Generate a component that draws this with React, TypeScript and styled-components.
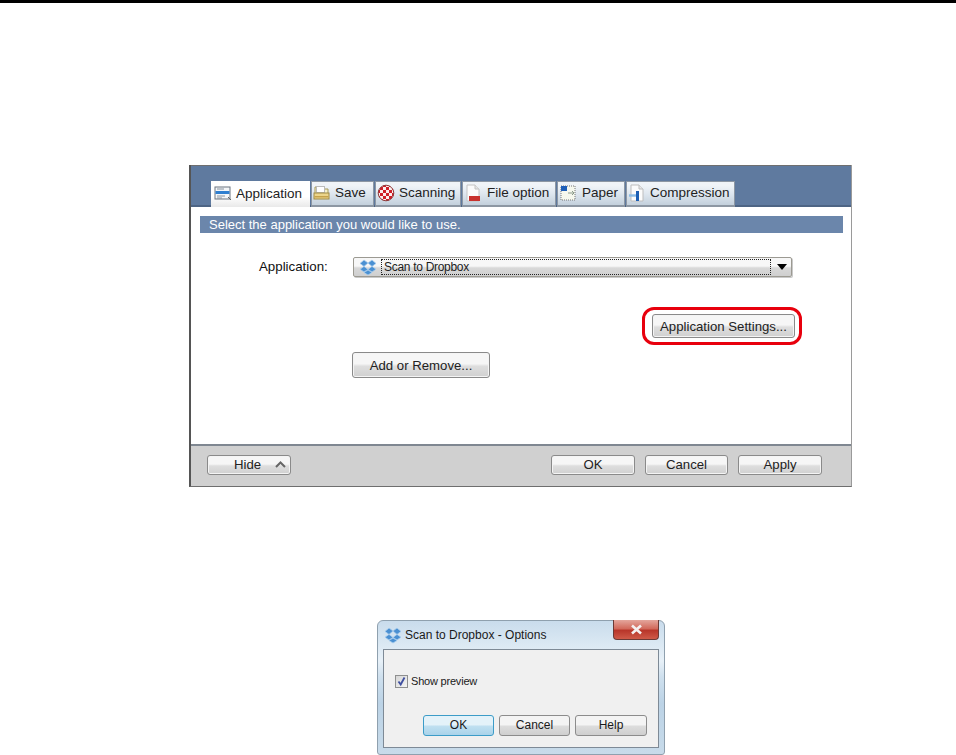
import React from "react";
import styled, { createGlobalStyle } from "styled-components";

const Global = createGlobalStyle`
  html, body { margin: 0; padding: 0; background: #fff; height: 755px; overflow: hidden; }
  * { box-sizing: border-box; }
  body { font-family: "Liberation Sans", Arial, sans-serif; color: #111; }
`;

const Page = styled.div`
  width: 956px;
  height: 755px;
  overflow: hidden;
  display: flex;
  flex-direction: column;
`;
const TopRule = styled.div`
  height: 3px;
  background: #000;
  flex: none;
`;
const MainWindow = styled.section`
  width: 663px;
  height: 322px;
  margin: 162px 0 0 189px;
  flex: none;
  display: flex;
  flex-direction: column;
  border-left: 2px solid #555;
  border-right: 1px solid #9a9a9a;
  border-bottom: 1px solid #6e6e6e;
  background: #fff;
`;
const TabHeader = styled.div`
  height: 42px;
  flex: none;
  background: #5f7a9f;
  border-top: 1px solid #6f6f6f;
  border-bottom: 2px solid #4d6484;
  padding: 15px 0 0 20px;
  display: flex;
  gap: 1px;
  align-items: flex-start;
`;
const Tab = styled.div<{ $w: number; $active?: boolean }>`
  width: ${(p) => p.$w}px;
  height: 26px;
  flex: none;
  display: flex;
  align-items: center;
  gap: 4px;
  padding: 0 0 2px ${(p) => (p.$active ? 3 : 1)}px;
  font-size: 13.5px;
  white-space: nowrap;
  color: #222;
  background: ${(p) =>
    p.$active
      ? "linear-gradient(#ffffff 0 60%, #e9e9e9)"
      : "linear-gradient(#f0f4f8 0 15%, #dfe7ef 50%, #c3d0dc)"};
  border: ${(p) => (p.$active ? "none" : "1px solid #8d97a3")};
  border-bottom: ${(p) => (p.$active ? "none" : "2px solid #8d97a3")};
`;
const TabIcon = styled.svg`
  width: 18px;
  height: 18px;
  flex: none;
`;
const TabLabel = styled.span<{ $gap?: number }>`
  margin-left: ${(p) => p.$gap ?? 0}px;
`;
const Body = styled.div`
  flex: 1;
  display: flex;
  flex-direction: column;
  padding: 9px 8px 0 9px;
  background: #fff;
`;
const Banner = styled.div`
  height: 17px;
  flex: none;
  background: #6b86ab;
  color: #fff;
  font-size: 13px;
  line-height: 17px;
  padding-left: 9px;
  white-space: nowrap;
`;
const ComboRow = styled.div`
  display: flex;
  align-items: center;
  margin-top: 24px;
  height: 20px;
  flex: none;
`;
const ComboLabel = styled.span`
  width: 153px;
  padding: 0 0 1px 59px;
  font-size: 13.3px;
  white-space: nowrap;
`;
const Combo = styled.div`
  width: 439px;
  height: 20px;
  display: flex;
  align-items: center;
  padding-left: 5px;
  border: 1px solid #9c9a92;
  border-radius: 2px;
  background: linear-gradient(#f7f7f7 0 45%, #d8d8d8 55%, #cfcfcf);
  box-shadow: 1px 1px 0 #c9c9c9;
`;
const ComboFocus = styled.div`
  width: 390px;
  height: 16px;
  margin-left: 4px;
  display: flex;
  align-items: center;
  padding: 0 0 1px 2px;
  border: 1px dotted #222;
  font-size: 12px;
  letter-spacing: -0.3px;
  color: #1c1c1c;
  white-space: nowrap;
`;
const ComboArrow = styled.div`
  width: 0;
  height: 0;
  margin-left: 6px;
  border-left: 5.5px solid transparent;
  border-right: 5.5px solid transparent;
  border-top: 6px solid #000;
`;
const SettingsRow = styled.div`
  display: flex;
  justify-content: flex-end;
  padding-right: 41px;
  margin-top: 30px;
  flex: none;
`;
const Highlight = styled.div`
  width: 160px;
  height: 38px;
  padding: 4px 4px 4px 7px;
  border: 3px solid #e8000d;
  border-radius: 12px;
  display: flex;
  align-items: center;
`;
const WinButton = styled.div<{ $w: number; $h: number }>`
  width: ${(p) => p.$w}px;
  height: ${(p) => p.$h}px;
  flex: none;
  display: flex;
  align-items: center;
  justify-content: center;
  border: 1px solid #8a8a8a;
  border-radius: 3px;
  font-size: 13.2px;
  color: #222;
  white-space: nowrap;
  background: linear-gradient(#f6f6f6 0 45%, #dedede 55%, #d0d0d0);
  box-shadow: inset 0 0 0 1px #f4f4f4;
`;
const AddRow = styled.div`
  margin: 7px 0 0 152px;
  flex: none;
`;
const Footer = styled.footer`
  height: 42px;
  flex: none;
  background: #d0d0d0;
  border-top: 2px solid #7f8791;
  display: flex;
  align-items: center;
  padding: 0 29px 3px 16px;
  gap: 10px;
`;
const HideButton = styled(WinButton)`
  justify-content: flex-start;
  padding-left: 26px;
  margin-right: auto;
  gap: 14px;
`;
const Dialog = styled.section`
  width: 288px;
  height: 135px;
  margin: 133px 0 0 377px;
  flex: none;
  display: flex;
  flex-direction: column;
  padding: 0 5px 6px;
  border: 1px solid #8fa0ae;
  border-radius: 6px 6px 3px 3px;
  background: linear-gradient(#c9dcec 0, #e8f1f8 30%, #cfe0ee 42%, #bcd3e6 62%, #c8dbea);
`;
const TitleBar = styled.div`
  height: 28px;
  flex: none;
  display: flex;
  align-items: flex-start;
  padding: 5px 0 0 1px;
  gap: 3px;
  font-size: 12px;
  line-height: 18px;
  color: #1a1a1a;
  position: relative;
  white-space: nowrap;
`;
const CloseButton = styled.div`
  position: absolute;
  top: -1px;
  right: 0;
  width: 46px;
  height: 20px;
  display: flex;
  align-items: center;
  justify-content: center;
  border: 1px solid #6b3a36;
  border-top: none;
  border-radius: 0 0 4px 4px;
  background: linear-gradient(#e4a69c 0, #d26a5c 45%, #b8362a 55%, #cf5a48);
`;
const DialogPanel = styled.div`
  flex: 1;
  background: #f0f0f0;
  border: 1px solid #7e8a96;
  display: flex;
  flex-direction: column;
  padding: 25px 11px 0 11px;
`;
const CheckRow = styled.div`
  display: flex;
  align-items: center;
  gap: 3px;
  font-size: 11px;
  letter-spacing: -0.2px;
  height: 13px;
  color: #1a1a1a;
`;
const CheckLabel = styled.span`
  margin-bottom: 1px;
`;
const CheckBox = styled.div`
  width: 13px;
  height: 13px;
  flex: none;
  display: flex;
  align-items: center;
  justify-content: center;
  border: 1px solid #8e8f8f;
  background: linear-gradient(135deg, #d6d6d6, #f4f4f4);
`;
const DialogButtons = styled.div`
  display: flex;
  justify-content: flex-end;
  gap: 5px;
  margin-top: 27px;
`;
const DialogButton = styled.div<{ $primary?: boolean; $w: number }>`
  width: ${(p) => p.$w}px;
  height: 21px;
  display: flex;
  align-items: center;
  justify-content: center;
  padding-bottom: 1px;
  font-size: 12px;
  color: #1a1a1a;
  border: 1px solid ${(p) => (p.$primary ? "#3c9cc8" : "#8c8c8c")};
  border-radius: 3px;
  background: ${(p) =>
    p.$primary
      ? "linear-gradient(#e4f2f9 0 45%, #bfdff0 55%, #a9d3ea)"
      : "linear-gradient(#f4f4f4 0 45%, #dcdcdc 55%, #cfcfcf)"};
`;

const Dropbox = ({ size = 18 }: { size?: number }) => (
  <svg width={size} height={size} viewBox="0 0 18 18" style={{ flex: "none" }}>
    <g fill="#4a90d2" stroke="#a9cdec" strokeWidth="0.8" strokeLinejoin="round">
      <polygon points="5,2 9,5 5,8.4 1,5.4" />
      <polygon points="13,2 17,5.4 13,8.4 9,5" />
      <polygon points="5,8.4 9,11.4 5,14 1,11.2" />
      <polygon points="13,8.4 17,11.2 13,14 9,11.4" />
      <polygon points="9,12 13,14.6 9,17 5,14.6" />
    </g>
  </svg>
);

const AppIcon = () => (
  <TabIcon viewBox="0 0 18 18">
    <rect x="1" y="3" width="15" height="12" fill="#f4f6f8" stroke="#6a7480" />
    <rect x="1.5" y="7" width="14" height="3" fill="#2f7fd0" />
    <path d="M3 5h7M3 12h8M3 14h5" stroke="#8a94a0" />
    <path d="M14 13l3 3" stroke="#666" />
  </TabIcon>
);
const SaveIcon = () => (
  <TabIcon viewBox="0 0 18 18">
    <path d="M2 3h6l1 2h6v5H2z" fill="#f7f1c8" stroke="#a69a5c" />
    <rect x="3.5" y="2.5" width="8" height="6" fill="#fff" stroke="#bbb" />
    <rect x="1" y="9" width="15" height="6" fill="#ecd58a" stroke="#a08b45" />
    <rect x="1.5" y="12" width="14" height="1.5" fill="#c5a24a" />
  </TabIcon>
);
const ScanIcon = () => (
  <TabIcon viewBox="0 0 18 18">
    <defs>
      <pattern id="chk" width="6" height="6" patternUnits="userSpaceOnUse">
        <rect width="6" height="6" fill="#fbeeee" />
        <rect width="3" height="3" fill="#cf1f28" />
        <rect x="3" y="3" width="3" height="3" fill="#cf1f28" />
      </pattern>
    </defs>
    <circle cx="9" cy="9" r="7.8" fill="url(#chk)" stroke="#8e3a3a" />
  </TabIcon>
);
const FileIcon = () => (
  <TabIcon viewBox="0 0 18 18">
    <path d="M3 1h8l4 4v12H3z" fill="#fbfbfb" stroke="#c4c4c4" />
    <path d="M11 1v4h4" fill="#e6e6e6" stroke="#c4c4c4" />
    <rect x="5" y="12" width="11" height="5" fill="#c8322e" />
  </TabIcon>
);
const PaperIcon = () => (
  <TabIcon viewBox="0 0 18 18">
    <rect x="2" y="2" width="14" height="14" fill="#f6f8ee" stroke="#777" strokeDasharray="1 1" />
    <rect x="2" y="2" width="6" height="5" fill="#1f5fb8" />
    <path d="M9 9h6M13 7l2 2-2 2" stroke="#8a9a8a" fill="none" />
  </TabIcon>
);
const CompressIcon = () => (
  <TabIcon viewBox="0 0 18 18">
    <path d="M3 1h8l4 4v12H3z" fill="#fbfbfb" stroke="#bdbdbd" />
    <path d="M11 1v4h4" fill="#e8e8e8" stroke="#bdbdbd" />
    <path d="M1 11.5h7" stroke="#8cbce6" strokeWidth="2.4" />
    <rect x="8" y="7" width="3" height="10" fill="#1c5fb4" />
  </TabIcon>
);

const tabs = [
  { label: "Application", w: 99, icon: <AppIcon />, active: true, gap: 0 },
  { label: "Save", w: 63, icon: <SaveIcon />, gap: 0 },
  { label: "Scanning", w: 86, icon: <ScanIcon />, gap: 0 },
  { label: "File option", w: 94, icon: <FileIcon />, gap: 1 },
  { label: "Paper", w: 68, icon: <PaperIcon />, gap: 1 },
  { label: "Compression", w: 109, icon: <CompressIcon />, gap: 0 },
];

export default function App() {
  return (
    <Page>
      <Global />
      <TopRule />
      <MainWindow>
        <TabHeader>
          {tabs.map((t) => (
            <Tab key={t.label} $w={t.w} $active={t.active}>
              {t.icon}
              <TabLabel $gap={t.gap}>{t.label}</TabLabel>
            </Tab>
          ))}
        </TabHeader>
        <Body>
          <Banner>Select the application you would like to use.</Banner>
          <ComboRow>
            <ComboLabel>Application:</ComboLabel>
            <Combo>
              <Dropbox />
              <ComboFocus>Scan to Dropbox</ComboFocus>
              <ComboArrow />
            </Combo>
          </ComboRow>
          <SettingsRow>
            <Highlight>
              <WinButton $w={143} $h={24}>Application Settings...</WinButton>
            </Highlight>
          </SettingsRow>
          <AddRow>
            <WinButton $w={138} $h={26}>Add or Remove...</WinButton>
          </AddRow>
        </Body>
        <Footer>
          <HideButton $w={84} $h={20}>
            Hide
            <svg width="11" height="7" viewBox="0 0 11 7">
              <path d="M1 6l4.5-4.5L10 6" fill="none" stroke="#666" strokeWidth="2" />
            </svg>
          </HideButton>
          <WinButton $w={84} $h={20}>OK</WinButton>
          <WinButton $w={83} $h={20}>Cancel</WinButton>
          <WinButton $w={84} $h={20}>Apply</WinButton>
        </Footer>
      </MainWindow>
      <Dialog>
        <TitleBar>
          <Dropbox />
          Scan to Dropbox - Options
          <CloseButton>
            <svg width="13" height="11" viewBox="0 0 13 11">
              <path d="M2 1.5l9 8M11 1.5l-9 8" stroke="#f4f0f0" strokeWidth="2.6" />
            </svg>
          </CloseButton>
        </TitleBar>
        <DialogPanel>
          <CheckRow>
            <CheckBox>
              <svg width="11" height="11" viewBox="0 0 11 11">
                <path d="M2.5 5.5l2.2 3L8.5 1.5" fill="none" stroke="#3f4fa0" strokeWidth="1.8" />
              </svg>
            </CheckBox>
            <CheckLabel>Show preview</CheckLabel>
          </CheckRow>
          <DialogButtons>
            <DialogButton $primary $w={71}>OK</DialogButton>
            <DialogButton $w={71}>Cancel</DialogButton>
            <DialogButton $w={72}>Help</DialogButton>
          </DialogButtons>
        </DialogPanel>
      </Dialog>
    </Page>
  );
}
